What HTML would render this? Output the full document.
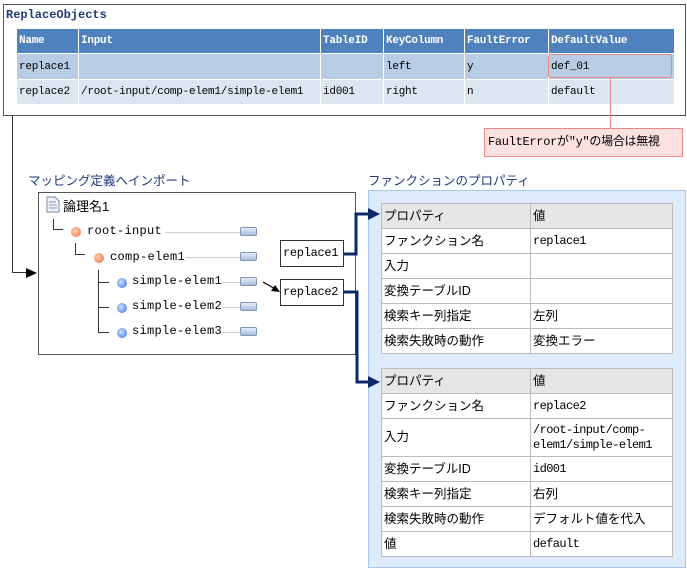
<!DOCTYPE html>
<html><head><meta charset="utf-8"><style>
*{margin:0;padding:0;box-sizing:border-box}
body{width:687px;height:573px;background:#fff;position:relative;overflow:hidden;font-family:"Liberation Mono","Noto Sans CJK JP",monospace;font-size:12px;color:#000}
.a{position:absolute}
table{border-collapse:collapse;position:absolute;table-layout:fixed}
.t1 td{border:1px solid #fff;padding:0 2px;white-space:nowrap;overflow:hidden;font-size:11px;letter-spacing:-0.25px}
.t1 tr.h td{background:#4f81bd;color:#fff;font-weight:bold}
.t1 tr.r1 td{background:#b8cce4}
.t1 tr.r2 td{background:#dce6f1}
.p td{border:1px solid #bbb;background:#fff;padding:0 2px;font-family:"Liberation Sans","Noto Sans CJK JP",sans-serif;font-size:12.5px;vertical-align:middle;line-height:15px}
.p tr.h td{background:#e6e6e6}
.p td.m{font-family:"Liberation Mono","Noto Sans CJK JP",monospace;font-size:12px;letter-spacing:-0.6px}
.node{font-size:12px;letter-spacing:0.3px}
.dot{position:absolute;width:10px;height:10px;border-radius:50%}
.o{background:radial-gradient(circle at 40% 40%,#ffd0b0,#f06a40);}
.b{background:radial-gradient(circle at 40% 40%,#cfe4ff,#2a6be0);}
.cn{position:absolute;width:17px;height:9px;border:1px solid #7f95bb;border-radius:2px;background:linear-gradient(#e8eef8,#a9bbd9)}
.ln{position:absolute;height:1px;background:#ccc}
</style></head><body>
<div class="a" style="left:3px;top:4px;width:683px;height:112px;border:1px solid #555"></div>
<div class="a" style="left:6px;top:8px;color:#1f3a7a;font-size:12px;letter-spacing:0px;font-weight:bold">ReplaceObjects</div>
<table class="t1" style="left:16px;top:28px;width:658px">
<colgroup><col style="width:62px"><col style="width:242px"><col style="width:63px"><col style="width:81px"><col style="width:84px"><col style="width:126px"></colgroup>
<tr class="h" style="height:25px"><td>Name</td><td>Input</td><td>TableID</td><td>KeyColumn</td><td>FaultError</td><td>DefaultValue</td></tr>
<tr class="r1" style="height:26px"><td>replace1</td><td></td><td></td><td>left</td><td>y</td><td>def_01</td></tr>
<tr class="r2" style="height:25px"><td>replace2</td><td>/root-input/comp-elem1/simple-elem1</td><td>id001</td><td>right</td><td>n</td><td>default</td></tr>
</table>
<div class="a" style="left:548px;top:54px;width:124px;height:24px;border:1px solid #e88;border-radius:3px"></div>
<div class="a" style="left:610px;top:78px;width:1px;height:50px;background:#e88"></div>
<div class="a" style="left:484px;top:128px;width:199px;height:29px;background:#fde0e0;border:1px solid #e88;line-height:27px;padding-left:3px;font-size:12px;letter-spacing:-0.3px">FaultErrorが"y"の場合は無視</div>

<div class="a" style="left:12px;top:116px;width:1px;height:157px;background:#333"></div>
<div class="a" style="left:12px;top:272px;width:18px;height:1px;background:#333"></div>
<div class="a" style="left:26px;top:268px;border-left:11px solid #000;border-top:5px solid transparent;border-bottom:5px solid transparent"></div>

<div class="a" style="left:28px;top:170px;color:#1f3a7a;font-family:'Liberation Sans','Noto Sans CJK JP',sans-serif;font-size:12.5px">マッピング定義へインポート</div>
<div class="a" style="left:38px;top:192px;width:318px;height:163px;border:1px solid #555"></div>
<svg class="a" style="left:46px;top:196px" width="14" height="17"><path d="M1 1h8l4 4v11H1z" fill="#eef2f8" stroke="#7a8aa8"/><path d="M3 6h7M3 9h8M3 12h8" stroke="#8898b8"/></svg>
<div class="a" style="left:63px;top:196px;font-family:'Liberation Sans','Noto Sans CJK JP',sans-serif;font-size:13px">論理名1</div>
<div class="a" style="left:53px;top:219px;width:1px;height:10px;background:#333"></div>
<div class="a" style="left:53px;top:229px;width:10px;height:1px;background:#333"></div>
<div class="dot o" style="left:71px;top:227px"></div>
<div class="a node" style="left:87px;top:224px">root-input</div>
<div class="ln" style="left:165px;top:232px;width:75px"></div><div class="cn" style="left:240px;top:227px"></div>
<div class="a" style="left:75px;top:243px;width:1px;height:11px;background:#333"></div>
<div class="a" style="left:75px;top:254px;width:10px;height:1px;background:#333"></div>
<div class="dot o" style="left:94px;top:253px"></div>
<div class="a node" style="left:110px;top:250px">comp-elem1</div>
<div class="ln" style="left:185px;top:257px;width:55px"></div><div class="cn" style="left:240px;top:252px"></div>
<div class="a" style="left:98px;top:270px;width:1px;height:63px;background:#333"></div>
<div class="a" style="left:98px;top:282px;width:11px;height:1px;background:#333"></div>
<div class="a" style="left:98px;top:307px;width:11px;height:1px;background:#333"></div>
<div class="a" style="left:98px;top:332px;width:11px;height:1px;background:#333"></div>
<div class="dot b" style="left:117px;top:278px"></div><div class="a node" style="left:132px;top:274px">simple-elem1</div>
<div class="dot b" style="left:117px;top:303px"></div><div class="a node" style="left:132px;top:299px">simple-elem2</div>
<div class="dot b" style="left:117px;top:328px"></div><div class="a node" style="left:132px;top:324px">simple-elem3</div>
<div class="ln" style="left:222px;top:282px;width:18px"></div><div class="cn" style="left:240px;top:277px"></div>
<div class="ln" style="left:222px;top:307px;width:18px"></div><div class="cn" style="left:240px;top:302px"></div>
<div class="ln" style="left:222px;top:332px;width:18px"></div><div class="cn" style="left:240px;top:327px"></div>
<div class="a node" style="left:280px;top:240px;width:64px;height:27px;border:1px solid #333;background:#fff;line-height:25px;padding-left:2px;letter-spacing:-0.3px">replace1</div>
<div class="a node" style="left:280px;top:279px;width:64px;height:27px;border:1px solid #333;background:#fff;line-height:25px;padding-left:2px;letter-spacing:-0.3px">replace2</div>
<svg class="a" style="left:262px;top:280px" width="20" height="14"><path d="M1 2L15 10" stroke="#000" stroke-width="1.2"/><path d="M18 12L9 11L13 5z" fill="#000"/></svg>

<div class="a" style="left:368px;top:170px;color:#1f3a7a;font-family:'Liberation Sans','Noto Sans CJK JP',sans-serif;font-size:12.5px">ファンクションのプロパティ</div>
<div class="a" style="left:368px;top:190px;width:318px;height:378px;background:#ddebfb;border:1px solid #a8c8ee"></div>
<svg class="a" style="left:340px;top:205px" width="45" height="185"><path d="M4 49H16V9H30M4 87H17V177H30" fill="none" stroke="#0c2a6a" stroke-width="3"/><path d="M40 9L28 3V15z M40 177L28 171V183z" fill="#0c2a6a"/></svg>
<table class="p" style="left:381px;top:203px;width:291px">
<colgroup><col style="width:149px"><col style="width:142px"></colgroup>
<tr class="h" style="height:25px"><td>プロパティ</td><td>値</td></tr>
<tr style="height:25px"><td>ファンクション名</td><td class="m">replace1</td></tr>
<tr style="height:25px"><td>入力</td><td></td></tr>
<tr style="height:25px"><td>変換テーブルID</td><td></td></tr>
<tr style="height:25px"><td>検索キー列指定</td><td>左列</td></tr>
<tr style="height:25px"><td>検索失敗時の動作</td><td>変換エラー</td></tr>
</table>
<table class="p" style="left:381px;top:368px;width:291px">
<colgroup><col style="width:149px"><col style="width:142px"></colgroup>
<tr class="h" style="height:25px"><td>プロパティ</td><td>値</td></tr>
<tr style="height:25px"><td>ファンクション名</td><td class="m">replace2</td></tr>
<tr style="height:38px"><td>入力</td><td class="m">/root-input/comp-elem1/simple-elem1</td></tr>
<tr style="height:25px"><td>変換テーブルID</td><td class="m">id001</td></tr>
<tr style="height:25px"><td>検索キー列指定</td><td>右列</td></tr>
<tr style="height:25px"><td>検索失敗時の動作</td><td>デフォルト値を代入</td></tr>
<tr style="height:25px"><td>値</td><td class="m">default</td></tr>
</table>
</body></html>
